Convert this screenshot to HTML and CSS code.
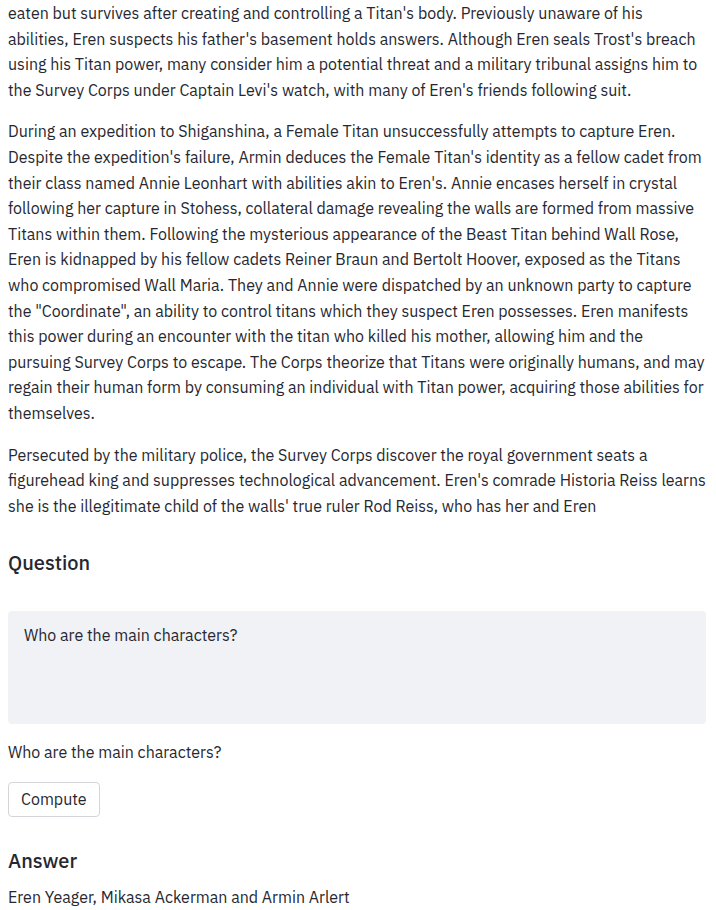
FILE: index.html
```html
<!DOCTYPE html>
<html lang="en">
<head>
<meta charset="utf-8">
<meta name="viewport" content="width=device-width, initial-scale=1">
<title>Question answering</title>
<link rel="stylesheet" href="styles.css">
</head>
<body>
<main class="page">
  <article class="passage">
    <p>eaten but survives after creating and controlling a Titan's body. Previously unaware of his
    abilities, Eren suspects his father's basement holds answers. Although Eren seals Trost's breach
    using his Titan power, many consider him a potential threat and a military tribunal assigns him to
    the Survey Corps under Captain Levi's watch, with many of Eren's friends following suit.</p>
    <p>During an expedition to Shiganshina, a Female Titan unsuccessfully attempts to capture Eren.
    Despite the expedition's failure, Armin deduces the Female Titan's identity as a fellow cadet from
    their class named Annie Leonhart with abilities akin to Eren's. Annie encases herself in crystal
    following her capture in Stohess, collateral damage revealing the walls are formed from massive
    Titans within them. Following the mysterious appearance of the Beast Titan behind Wall Rose,
    Eren is kidnapped by his fellow cadets Reiner Braun and Bertolt Hoover, exposed as the Titans
    who compromised Wall Maria. They and Annie were dispatched by an unknown party to capture
    the "Coordinate", an ability to control titans which they suspect Eren possesses. Eren manifests
    this power during an encounter with the titan who killed his mother, allowing him and the
    pursuing Survey Corps to escape. The Corps theorize that Titans were originally humans, and may
    regain their human form by consuming an individual with Titan power, acquiring those abilities for
    themselves.</p>
    <p>Persecuted by the military police, the Survey Corps discover the royal government seats a
    figurehead king and suppresses technological advancement. Eren's comrade Historia Reiss learns
    she is the illegitimate child of the walls' true ruler Rod Reiss, who has her and Eren</p>
  </article>
  <h2 class="heading"><label for="question">Question</label></h2>
  <textarea class="question" id="question">Who are the main characters?</textarea>
  <p class="echo">Who are the main characters?</p>
  <button class="compute" type="button">Compute</button>
  <h2 class="heading answer-heading">Answer</h2>
  <p class="answer">Eren Yeager, Mikasa Ackerman and Armin Arlert</p>
</main>
</body>
</html>
```
FILE: styles.css
```css
* {
  box-sizing: border-box;
}

body {
  margin: 0;
  background: #ffffff;
  color: #262730;
  font-family: "IBM Plex Sans", Roboto, "Liberation Sans", sans-serif;
  font-size: 16px;
  line-height: 1.6;
}

p,
h2 {
  margin: 0;
}

.page {
  padding: 1px 10px 0 8px;
}

.passage {
  display: flex;
  flex-direction: column;
  gap: 16px;
}

.heading {
  margin: 32px 0 36px;
  font-size: 20px;
  font-weight: 500;
  line-height: 24px;
}

.question {
  display: block;
  width: 100%;
  height: 113px;
  padding: 12px 16px;
  border: 0;
  border-radius: 4px;
  background: #f0f2f6;
  color: inherit;
  font: inherit;
  resize: none;
}

.echo {
  margin: 16px 0;
}

.compute {
  display: block;
  padding: 4px 12px;
  border: 1px solid #d4d5d9;
  border-radius: 4px;
  background: #ffffff;
  color: inherit;
  font: inherit;
}

.answer-heading {
  margin-bottom: 12px;
}
```
